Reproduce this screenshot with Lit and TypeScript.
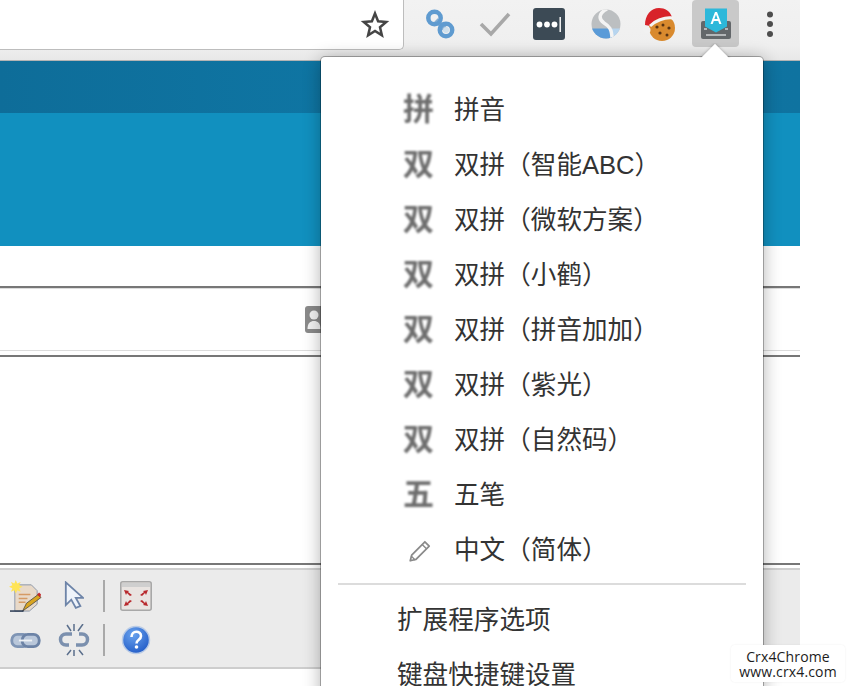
import { LitElement, html, css, svg } from "lit";
import { customElement } from "lit/decorators.js";

const star = svg`<svg width="30" height="30" viewBox="0 0 30 30"><path d="M15 3.500l3.100 7.800 8.100.7-6.200 5.300 1.900 8.100L15 21l-6.900 4.400 1.900-8.100-6.200-5.300 8.100-.7z" fill="none" stroke="#454545" stroke-width="2.500"/></svg>`;

const linkIcon = svg`<svg width="32" height="32" viewBox="0 0 32 32"><path d="M12 12l9 9" stroke="#86aed2" stroke-width="5"/><circle cx="10.500" cy="10" r="6.200" fill="none" stroke="#5f9bd0" stroke-width="4.500"/><circle cx="22" cy="22" r="6.200" fill="none" stroke="#5f9bd0" stroke-width="4.500"/><circle cx="22" cy="22" r="3" fill="#cfe0ec"/></svg>`;

const checkIcon = svg`<svg width="32" height="32" viewBox="0 0 32 32"><path d="M2 16l10 10L30 6" fill="none" stroke="#a8a8a8" stroke-width="3.600"/></svg>`;

const lastPass = svg`<svg width="32" height="32" viewBox="0 0 32 32"><rect width="32" height="32" rx="3" fill="#3c4a55"/><circle cx="6.500" cy="16.500" r="2.900" fill="#fff"/><circle cx="14" cy="16.500" r="2.900" fill="#fff"/><circle cx="21.500" cy="16.500" r="2.900" fill="#fff"/><rect x="26.500" y="9" width="1.400" height="15" fill="#fff"/></svg>`;

const simpleNote = svg`<svg width="30" height="30" viewBox="0 0 30 30"><defs><clipPath id="sn"><circle cx="15" cy="15" r="14.500"/></clipPath></defs><g clip-path="url(#sn)"><rect width="30" height="30" fill="#bcbfc1"/><rect y="19.500" width="21" height="11" fill="#5a9bd8"/><rect x="21" y="19.500" width="9" height="11" fill="#b7d5ef"/><path d="M16 0C8 4 7 10 13 14c5 3 8 6 8 16" fill="none" stroke="#f4f4f4" stroke-width="3.500"/></g></svg>`;

const cookie = svg`<svg width="36" height="36" viewBox="0 0 36 36"><circle cx="20" cy="22" r="13" fill="#d98a2e"/><circle cx="15" cy="21" r="1.600" fill="#5a3413"/><circle cx="21" cy="19" r="1.500" fill="#5a3413"/><circle cx="27" cy="22" r="1.600" fill="#5a3413"/><circle cx="18" cy="27" r="1.600" fill="#5a3413"/><circle cx="25" cy="29" r="1.500" fill="#5a3413"/><path d="M3 19C3 9 9 2 17 2c6 0 11 3 13 9C24 10 12 12 8 20z" fill="#d8232a"/><path d="M8 20c5-5 14-9 23-8" fill="none" stroke="#f4f4f4" stroke-width="3"/><circle cx="5" cy="24" r="3.500" fill="#f1f1f1"/></svg>`;

const keyboard = svg`<svg width="36" height="40" viewBox="0 0 36 40"><rect x="3" y="17" width="30" height="18" rx="2" fill="#63676a"/><g fill="#b4b7b9"><rect x="6" y="24" width="3" height="2"/><rect x="27" y="24" width="3" height="2"/><rect x="8" y="30" width="20" height="2"/></g><path d="M7 4.500h22v18l-11 6-11-6z" fill="#2db8da"/><path d="M12.500 20l4.500-12h2l4.500 12h-2.200l-1.100-3h-4.400l-1.100 3zM16.400 15h3.200L18 10.400z" fill="#fff"/></svg>`;

const kebab = svg`<svg width="8" height="26" viewBox="0 0 8 26"><circle cx="4" cy="3.500" r="3" fill="#4d4d4d"/><circle cx="4" cy="13" r="3" fill="#4d4d4d"/><circle cx="4" cy="23" r="3" fill="#4d4d4d"/></svg>`;

const person = svg`<svg width="20" height="27" viewBox="0 0 20 27"><rect width="20" height="27" rx="3" fill="#8a8a8a"/><circle cx="9" cy="9" r="4.500" fill="#f2f2f2"/><path d="M2.500 23c0-6 3-8 6.500-8s6.500 2 6.500 8z" fill="#f2f2f2"/></svg>`;

const noteIcon = svg`<svg width="33" height="33" viewBox="0 0 34 34"><path d="M6 5h17l6 6v14l-8 7H6z" fill="#e8d9c8" stroke="#8b97a8"/><g stroke="#d59a63" stroke-width="1.500"><path d="M10 15h12M10 19h9M10 23h7"/></g><path d="M7 0l1.500 3.500L12 2l-1.500 3.500L14 7l-3.500 1.500L12 12l-3.500-1.500L7 14l-1.500-3.500L2 12l1.500-3.500L0 7l3.500-1.500L2 2l3.500 1.500z" fill="#ffe455"/><path d="M14 32l4-8 12-9 3 3-12 9z" fill="#d9a520" stroke="#444" stroke-width=".8"/><path d="M29 15l3 3 1-3-2-2z" fill="#c62828"/><path d="M1 32h14" stroke="#26364f" stroke-width="1.500"/></svg>`;

const cursorIcon = svg`<svg width="20" height="30" viewBox="0 0 22 32"><path d="M2 1v25l6-6 5 9 5-2-5-9h8z" fill="#eef3fa" stroke="#6d84a8" stroke-width="2"/></svg>`;

const fullIcon = svg`<svg width="32" height="30" viewBox="0 0 32 30"><rect x=".8" y=".8" width="30.400" height="28.400" rx="2" fill="#e9e4e1" stroke="#a8a8a8" stroke-width="1.600"/><rect x="2" y="2" width="28" height="4" fill="#cfcfcf"/><g fill="#b8282c"><path d="M4 9l5 1-1 1 4 3-2 1-3-3-1 2zM28 9l-5 1 1 1-4 3 2 1 3-3 1 2zM4 25l5-1-1-1 4-3-2-1-3 3-1-2zM28 25l-5-1 1-1-4-3 2-1 3 3 1-2z"/></g></svg>`;

const chainIcon = svg`<svg width="31" height="17" viewBox="0 0 32 18"><rect x="1.500" y="2.500" width="18" height="13" rx="6" fill="#b9c7da" stroke="#7f95b5" stroke-width="3"/><rect x="12.500" y="2.500" width="18" height="13" rx="6" fill="#b9c7da" stroke="#6c83a6" stroke-width="3"/><path d="M9 9h14" stroke="#eef1f5" stroke-width="2"/></svg>`;

const brokenIcon = svg`<svg width="32" height="32" viewBox="0 0 32 32"><g fill="none" stroke="#7b90ae" stroke-width="3.500"><path d="M14 10H8a5.500 5.500 0 000 11h3"/><path d="M18 21h6a5.500 5.500 0 000-11h-3"/></g><g stroke="#5b6f8c" stroke-width="1.500"><path d="M9 1l4 6M16 0v7M25 0l-5 7M9 31l4-5M16 32v-6M25 31l-4-5"/></g></svg>`;

const helpIcon = svg`<svg width="30" height="30" viewBox="0 0 30 30"><defs><radialGradient id="h" cx=".4" cy=".3" r=".8"><stop offset="0" stop-color="#6aa3ee"/><stop offset="1" stop-color="#1c56c4"/></radialGradient></defs><circle cx="15" cy="15" r="13.500" fill="url(#h)" stroke="#b9cbe6" stroke-width="1.500"/><path d="M10.500 12c0-7 9.500-6.500 9.500-1 0 4-4.500 3.500-4.500 7.500" fill="none" stroke="#fff" stroke-width="2.600"/><circle cx="15.500" cy="22" r="1.800" fill="#fff"/></svg>`;

const pencil = svg`<svg width="26" height="26" viewBox="0 0 24 24"><path d="M3 21l1.300-5.200L16.500 3.500l4 4L8.300 19.700z" fill="none" stroke="#8a8a8a" stroke-width="1.600" stroke-linejoin="round"/><path d="M14 6l4 4M3.800 16.500l3.700 3.700" stroke="#8a8a8a" stroke-width="1.300"/></svg>`;

const inputs: { mark: string; label: string }[] = [
  { mark: "拼", label: "拼音" },
  { mark: "双", label: "双拼（智能ABC）" },
  { mark: "双", label: "双拼（微软方案）" },
  { mark: "双", label: "双拼（小鹤）" },
  { mark: "双", label: "双拼（拼音加加）" },
  { mark: "双", label: "双拼（紫光）" },
  { mark: "双", label: "双拼（自然码）" },
  { mark: "五", label: "五笔" },
  { mark: "", label: "中文（简体）" },
];

@customElement("app-root")
export class AppRoot extends LitElement {
  static styles = css`
    :host {
      display: block;
      width: 850px;
      height: 686px;
      overflow: hidden;
      background: #fff;
      font-family: "Liberation Sans", "Noto Sans CJK SC", sans-serif;
    }
    .page { position: relative; width: 850px; height: 686px; overflow: hidden; }
    .main { width: 800px; display: flex; flex-direction: column; }

    .chrome {
      height: 60px;
      display: flex;
      align-items: flex-start;
      background: linear-gradient(#f2f2f2, #efefef 75%, #e8e8e8);
      border-bottom: 1px solid #b4b4b4;
    }
    .omni {
      width: 404px;
      height: 50px;
      box-sizing: border-box;
      flex: none;
      background: #fff;
      border: 1px solid #bdbdbd;
      border-width: 0 1px 1px 0;
      border-bottom-right-radius: 5px;
      display: flex;
      justify-content: flex-end;
      align-items: center;
      padding-right: 13px;
    }
    .ext { display: flex; flex: 1; height: 48px; margin-left: -1px; filter: blur(0.6px); }
    .slot { flex: none; display: flex; align-items: center; justify-content: center; height: 48px; }
    .s-link { width: 37px; margin-left: 18px; }
    .s-check { width: 32px; margin-left: 21px; }
    .s-lp { width: 32px; margin-left: 22px; }
    .s-sn { width: 32px; margin-left: 25px; }
    .s-ck { width: 36px; margin-left: 20px; }
    .s-kb { width: 47px; margin-left: 14px; background: #c9c9c9; border-radius: 4px; height: 47px; }
    .s-more { width: 8px; margin-left: 27px; }

    .band-dark { height: 52px; background: linear-gradient(90deg, #0e6d99, #0f77a5 50%, #0f73a0); }
    .band { height: 133px; background: #1190bf; }
    .gap-a { height: 40px; }
    .rule-dark { height: 2px; background: #777; }
    .rule-light { height: 1px; background: #dcdcdc; }
    .addr { height: 61px; display: flex; justify-content: flex-end; align-items: center; padding-right: 479px; }
    .clip { width: 16px; height: 27px; overflow: hidden; filter: blur(0.4px); }
    .gap-b { height: 4px; }
    .editor { height: 206px; }
    .gap-c { height: 3px; }
    .tools {
      height: 101px;
      box-sizing: border-box;
      border-top: 2px solid #cfcfcf;
      border-bottom: 2px solid #cdcdcd;
      background: #ebebeb;
      display: flex;
      flex-direction: column;
      gap: 12px;
      padding: 10px 0 0 9px;
    }
    .tool-row { display: flex; align-items: center; height: 32px; }
    .tool { flex: none; width: 33px; display: flex; align-items: center; justify-content: center; filter: blur(0.6px); }
    .tool-b { margin-left: 15px; }
    .sep { flex: none; width: 2px; height: 32px; margin-left: 13px; background: #a9a9a9; }
    .tool-c { margin-left: 14px; }

    .popup {
      position: absolute;
      left: 321px;
      top: 57px;
      width: 442px;
      height: 660px;
      background: #fff;
      border-radius: 4px 4px 0 0;
      box-shadow: 0 0 0 1px rgba(0,0,0,.28), 0 2px 18px rgba(0,0,0,.32);
      padding-top: 26px;
      box-sizing: border-box;
      color: #333;
      font-size: 25.6px;
    }
    .caret {
      position: absolute;
      left: 698px;
      top: 43px;
      width: 34px;
      height: 15px;
      overflow: hidden;
    }
    .caret::before {
      content: "";
      position: absolute;
      left: 7px;
      top: 5px;
      width: 20px;
      height: 20px;
      background: #fff;
      transform: rotate(45deg);
      box-shadow: 0 0 3px rgba(0,0,0,.3);
    }
    .row { display: flex; align-items: center; height: 55px; }
    .mark {
      width: 133px;
      flex: none;
      padding-left: 82px;
      box-sizing: border-box;
      font-size: 31px;
      font-weight: 700;
      color: #6e6e6e;
      filter: blur(0.85px);
      line-height: 1;
      margin-top: -2px;
    }
    .pen { width: 133px; flex: none; padding-left: 86px; box-sizing: border-box; display: flex; }
    .label { white-space: nowrap; line-height: 1; }
    .divider { height: 2px; background: #dcdcdc; margin: 5px 17px 0 17px; }
    .opt { height: 55px; display: flex; align-items: center; padding-left: 76px; line-height: 1; }
    .opt-first { margin-top: 8px; }
    .watermark {
      position: absolute;
      left: 731px;
      top: 645px;
      width: 114px;
      height: 37px;
      border-radius: 4px;
      background: #fff;
      color: #1c1c1c;
      font-family: "Open Sans", "Liberation Sans", sans-serif;
      font-size: 14px;
      line-height: 15px;
      display: flex;
      flex-direction: column;
      align-items: center;
      justify-content: center;
      letter-spacing: 0.15px;
      box-shadow: 0 0 2px rgba(0,0,0,.08);
      white-space: nowrap;
    }
  `;

  render() {
    return html`
      <div class="page">
        <div class="main">
          <div class="chrome">
            <div class="omni">${star}</div>
            <div class="ext">
              <div class="slot s-link">${linkIcon}</div>
              <div class="slot s-check">${checkIcon}</div>
              <div class="slot s-lp">${lastPass}</div>
              <div class="slot s-sn">${simpleNote}</div>
              <div class="slot s-ck">${cookie}</div>
              <div class="slot s-kb">${keyboard}</div>
              <div class="slot s-more">${kebab}</div>
            </div>
          </div>
          <div class="band-dark"></div>
          <div class="band"></div>
          <div class="gap-a"></div>
          <div class="rule-dark"></div>
          <div class="rule-light"></div>
          <div class="addr"><div class="clip">${person}</div></div>
          <div class="rule-light"></div>
          <div class="gap-b"></div>
          <div class="rule-dark"></div>
          <div class="editor"></div>
          <div class="rule-dark"></div>
          <div class="gap-c"></div>
          <div class="tools">
            <div class="tool-row">
              <div class="tool">${noteIcon}</div>
              <div class="tool tool-b">${cursorIcon}</div>
              <div class="sep"></div>
              <div class="tool tool-c">${fullIcon}</div>
            </div>
            <div class="tool-row">
              <div class="tool">${chainIcon}</div>
              <div class="tool tool-b">${brokenIcon}</div>
              <div class="sep"></div>
              <div class="tool tool-c">${helpIcon}</div>
            </div>
          </div>
        </div>
        <div class="popup">
          ${inputs.map(
            (i) => html`<div class="row">
              ${i.mark
                ? html`<span class="mark">${i.mark}</span>`
                : html`<span class="pen">${pencil}</span>`}
              <span class="label">${i.label}</span>
            </div>`
          )}
          <div class="divider"></div>
          <div class="opt opt-first">扩展程序选项</div>
          <div class="opt">键盘快捷键设置</div>
        </div>
        <div class="caret"></div>
        <div class="watermark"><span>Crx4Chrome</span><span>www.crx4.com</span></div>
      </div>
    `;
  }
}
